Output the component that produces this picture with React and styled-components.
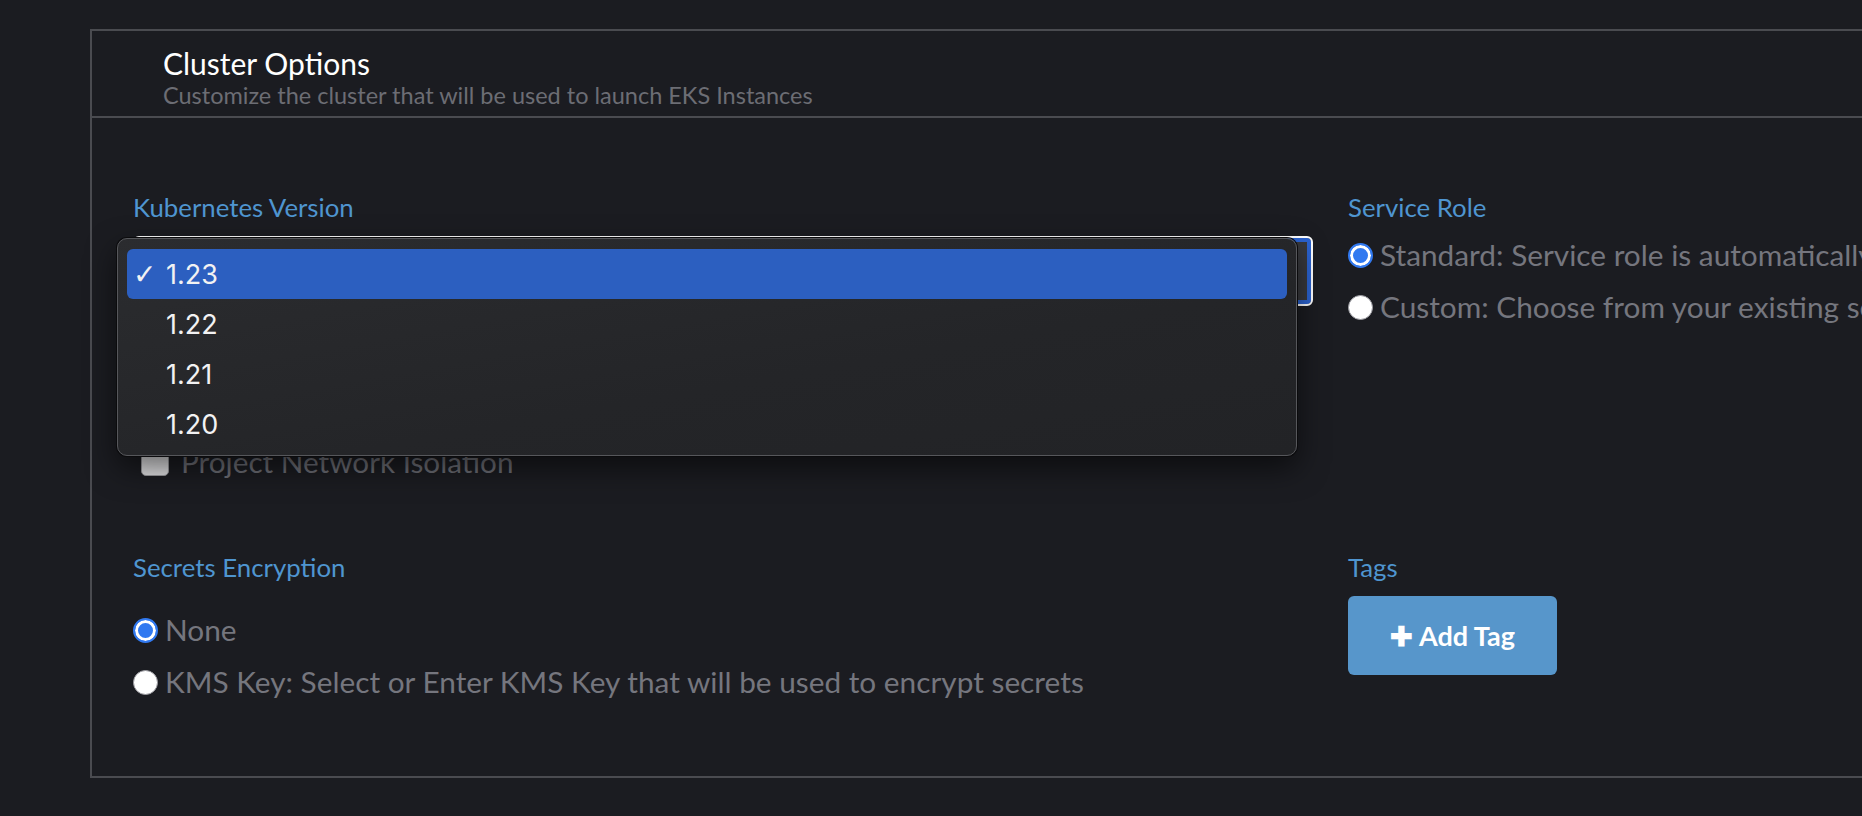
import React from "react"
import styled, { createGlobalStyle } from "styled-components"

const GlobalStyle = createGlobalStyle`
  html, body {
    margin: 0;
    padding: 0;
    background: #1b1c21;
    overflow: hidden;
  }
  body {
    font-family: Lato, "Open Sans", sans-serif;
  }
`

const Page = styled.div`
  width: 1862px;
  height: 816px;
  padding: 29px 0 0 90px;
  box-sizing: border-box;
`

const Card = styled.section`
  width: 2600px;
  border: 2px solid #4a4b50;
  box-sizing: border-box;
`

const CardHeader = styled.header`
  padding: 16px 0 7px 71px;
  border-bottom: 2px solid #4a4b50;
`

const Title = styled.h2`
  margin: 0;
  color: #ffffff;
  font-size: 30px;
  font-weight: 400;
  line-height: 32px;
`

const Subtitle = styled.p`
  margin: 2px 0 0;
  color: #6c6d74;
  font-size: 23.5px;
  line-height: 28px;
`

const CardBody = styled.div`
  display: grid;
  grid-template-columns: 1180px 1180px;
  column-gap: 35px;
  row-gap: 75px;
  padding: 75px 43px 78px 41px;
`

const Column = styled.div`
  display: flex;
  flex-direction: column;
`

const Label = styled.div`
  color: #4f95d0;
  font-size: 25.8px;
  line-height: 28px;
  margin-bottom: ${p => p.$gap || 15}px;
`

const SelectWrap = styled.div`
  position: relative;
`

const Select = styled.div`
  height: 70px;
  border: 2px solid #ffffff;
  border-radius: 6px;
  background: #38393d;
  box-shadow: inset 0 0 0 4px #2b63d0;
  box-sizing: border-box;
`

const Menu = styled.ul`
  position: absolute;
  top: 2px;
  left: -16px;
  width: 1180px;
  height: 218px;
  margin: 0;
  padding: 10px 9px 8px;
  box-sizing: border-box;
  list-style: none;
  border: 1px solid #56575b;
  border-radius: 10px;
  background: linear-gradient(170deg, #2b2c2f 0%, #242528 60%, #222326 100%);
  box-shadow: 0 0 0 1px #0b0b0d, 0 12px 30px rgba(0, 0, 0, 0.55);
  z-index: 10;
`

const MenuItem = styled.li`
  display: flex;
  align-items: center;
  height: 50px;
  border-radius: 6px;
  background: ${p => (p.$active ? "#2c5fc0" : "transparent")};
  color: #f2f2f3;
  font-family: Inter, "Noto Sans", sans-serif;
  font-size: 27px;
`

const Check = styled.span`
  width: 39px;
  padding-left: 6px;
  box-sizing: border-box;
  font-size: 28px;
  font-family: "DejaVu Sans", sans-serif;
`

const CheckRow = styled.label`
  display: flex;
  align-items: center;
  gap: 12px;
  margin: 140px 0 0 8px;
  color: #6c6d75;
  font-size: 29.7px;
  line-height: 32px;
`

const CheckBox = styled.span`
  width: 28px;
  height: 28px;
  border-radius: 5px;
  background: #e2e2e4;
  border: 1px solid #9a9a9e;
  box-sizing: border-box;
`

const RadioList = styled.div`
  display: flex;
  flex-direction: column;
  gap: 20px;
`

const RadioRow = styled.label`
  display: flex;
  align-items: center;
  gap: 7px;
  color: #75767e;
  font-size: 29.8px;
  line-height: 32px;
  white-space: nowrap;
`

const RadioDot = styled.span`
  flex: none;
  width: 25px;
  height: 25px;
  border-radius: 50%;
  box-sizing: border-box;
  ${p =>
    p.$checked
      ? `background: #3179f0; border: 2px solid #3179f0; box-shadow: inset 0 0 0 3px #ffffff;`
      : `background: #ffffff; border: 1px solid #9a9aa0;`}
`

const AddButton = styled.button`
  display: flex;
  align-items: center;
  justify-content: center;
  gap: 6px;
  width: 209px;
  height: 79px;
  border: 0;
  border-radius: 6px;
  background: #5796cb;
  color: #ffffff;
  font-family: Lato, sans-serif;
  font-size: 27px;
  font-weight: 700;
  cursor: pointer;
`

const versions = ["1.23", "1.22", "1.21", "1.20"]

const Radio = ({ checked, children }) => (
  <RadioRow>
    <RadioDot $checked={checked} />
    {children}
  </RadioRow>
)

export default function App() {
  return (
    <>
      <GlobalStyle />
      <Page>
        <Card>
          <CardHeader>
            <Title>Cluster Options</Title>
            <Subtitle>Customize the cluster that will be used to launch EKS Instances</Subtitle>
          </CardHeader>
          <CardBody>
            <Column>
              <Label>Kubernetes Version</Label>
              <SelectWrap>
                <Select />
                <Menu>
                  {versions.map((v, i) => (
                    <MenuItem key={v} $active={i === 0}>
                      <Check>{i === 0 ? "✓" : ""}</Check>
                      {v}
                    </MenuItem>
                  ))}
                </Menu>
              </SelectWrap>
              <CheckRow>
                <CheckBox />
                Project Network Isolation
              </CheckRow>
            </Column>
            <Column>
              <Label $gap={18}>Service Role</Label>
              <RadioList>
                <Radio checked>Standard: Service role is automatically created and managed by Rancher</Radio>
                <Radio>Custom: Choose from your existing service roles</Radio>
              </RadioList>
            </Column>
            <Column>
              <Label $gap={33}>Secrets Encryption</Label>
              <RadioList>
                <Radio checked>None</Radio>
                <Radio>KMS Key: Select or Enter KMS Key that will be used to encrypt secrets</Radio>
              </RadioList>
            </Column>
            <Column>
              <Label>Tags</Label>
              <AddButton>
                <span>✚</span>
                <span>Add Tag</span>
              </AddButton>
            </Column>
          </CardBody>
        </Card>
      </Page>
    </>
  )
}
